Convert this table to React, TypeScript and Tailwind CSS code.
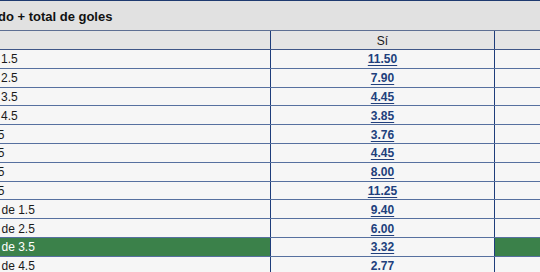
import React from 'react';

type Row = { label: string; odds: string; picked?: boolean };

const rows: Row[] = [
    { label: "Local y más de 1.5", odds: "11.50" },
    { label: "Local y más de 2.5", odds: "7.90" },
    { label: "Local y más de 3.5", odds: "4.45" },
    { label: "Local y más de 4.5", odds: "3.85" },
    { label: "Empate más 1.5", odds: "3.76" },
    { label: "Empate más 2.5", odds: "4.45" },
    { label: "Empate más 3.5", odds: "8.00" },
    { label: "Empate más 4.5", odds: "11.25" },
    { label: "Visitante y más de 1.5", odds: "9.40" },
    { label: "Visitante y más de 2.5", odds: "6.00" },
    { label: "Visitante y más de 3.5", odds: "3.32", picked: true },
    { label: "Visitante y más de 4.5", odds: "2.77" },
];

export default function App() {
    return (
        <div className="w-[540px] h-[272px] overflow-hidden bg-white font-['Liberation_Sans',Arial,sans-serif] text-[12px] text-[#1a1a1a]">
            <div className="ml-[-88px] w-[820px]">
                {/* market title */}
                <div className="h-[31px] flex items-center pt-[3px] border-t border-b border-t-[#1f3a70] border-b-[#5d6f93] bg-[#e1e1e1] pl-[39px]">
                    <span className="text-[13px] font-bold text-[#111]">Resultado + total de goles</span>
                </div>

                {/* column heads */}
                <div className="flex h-[19px] bg-[#e4e4e4] border-b border-[#3f5687]">
                    <div className="w-[359px] border-r border-[#1e3d7b]" />
                    <div className="w-[224px] border-r border-[#1e3d7b] flex items-center justify-center pt-[1px]">Sí</div>
                    <div className="w-[224px] flex items-center justify-center pt-[1px]">No</div>
                </div>

                {rows.map((r) => (
                    <div key={r.label} className="flex h-[18.8px] bg-[#f6f6f6] border-b border-[#56709f]">
                        <div className={r.picked
                            ? "w-[359px] border-r border-[#1e3d7b] bg-[#3b814a] text-white flex items-center pl-[5px] pt-[1px]"
                            : "w-[359px] border-r border-[#1e3d7b] flex items-center pl-[5px] pt-[1px]"}>
                            {r.label}
                        </div>
                        <div className="w-[224px] border-r border-[#1e3d7b] flex items-center justify-center pt-[1px]">
                            <a href="#" className="font-bold text-[#213f7c] underline underline-offset-2">{r.odds}</a>
                        </div>
                        <div className={r.picked
                            ? "w-[224px] bg-[#3b814a]"
                            : "w-[224px]"} />
                    </div>
                ))}
            </div>
        </div>
    );
}
